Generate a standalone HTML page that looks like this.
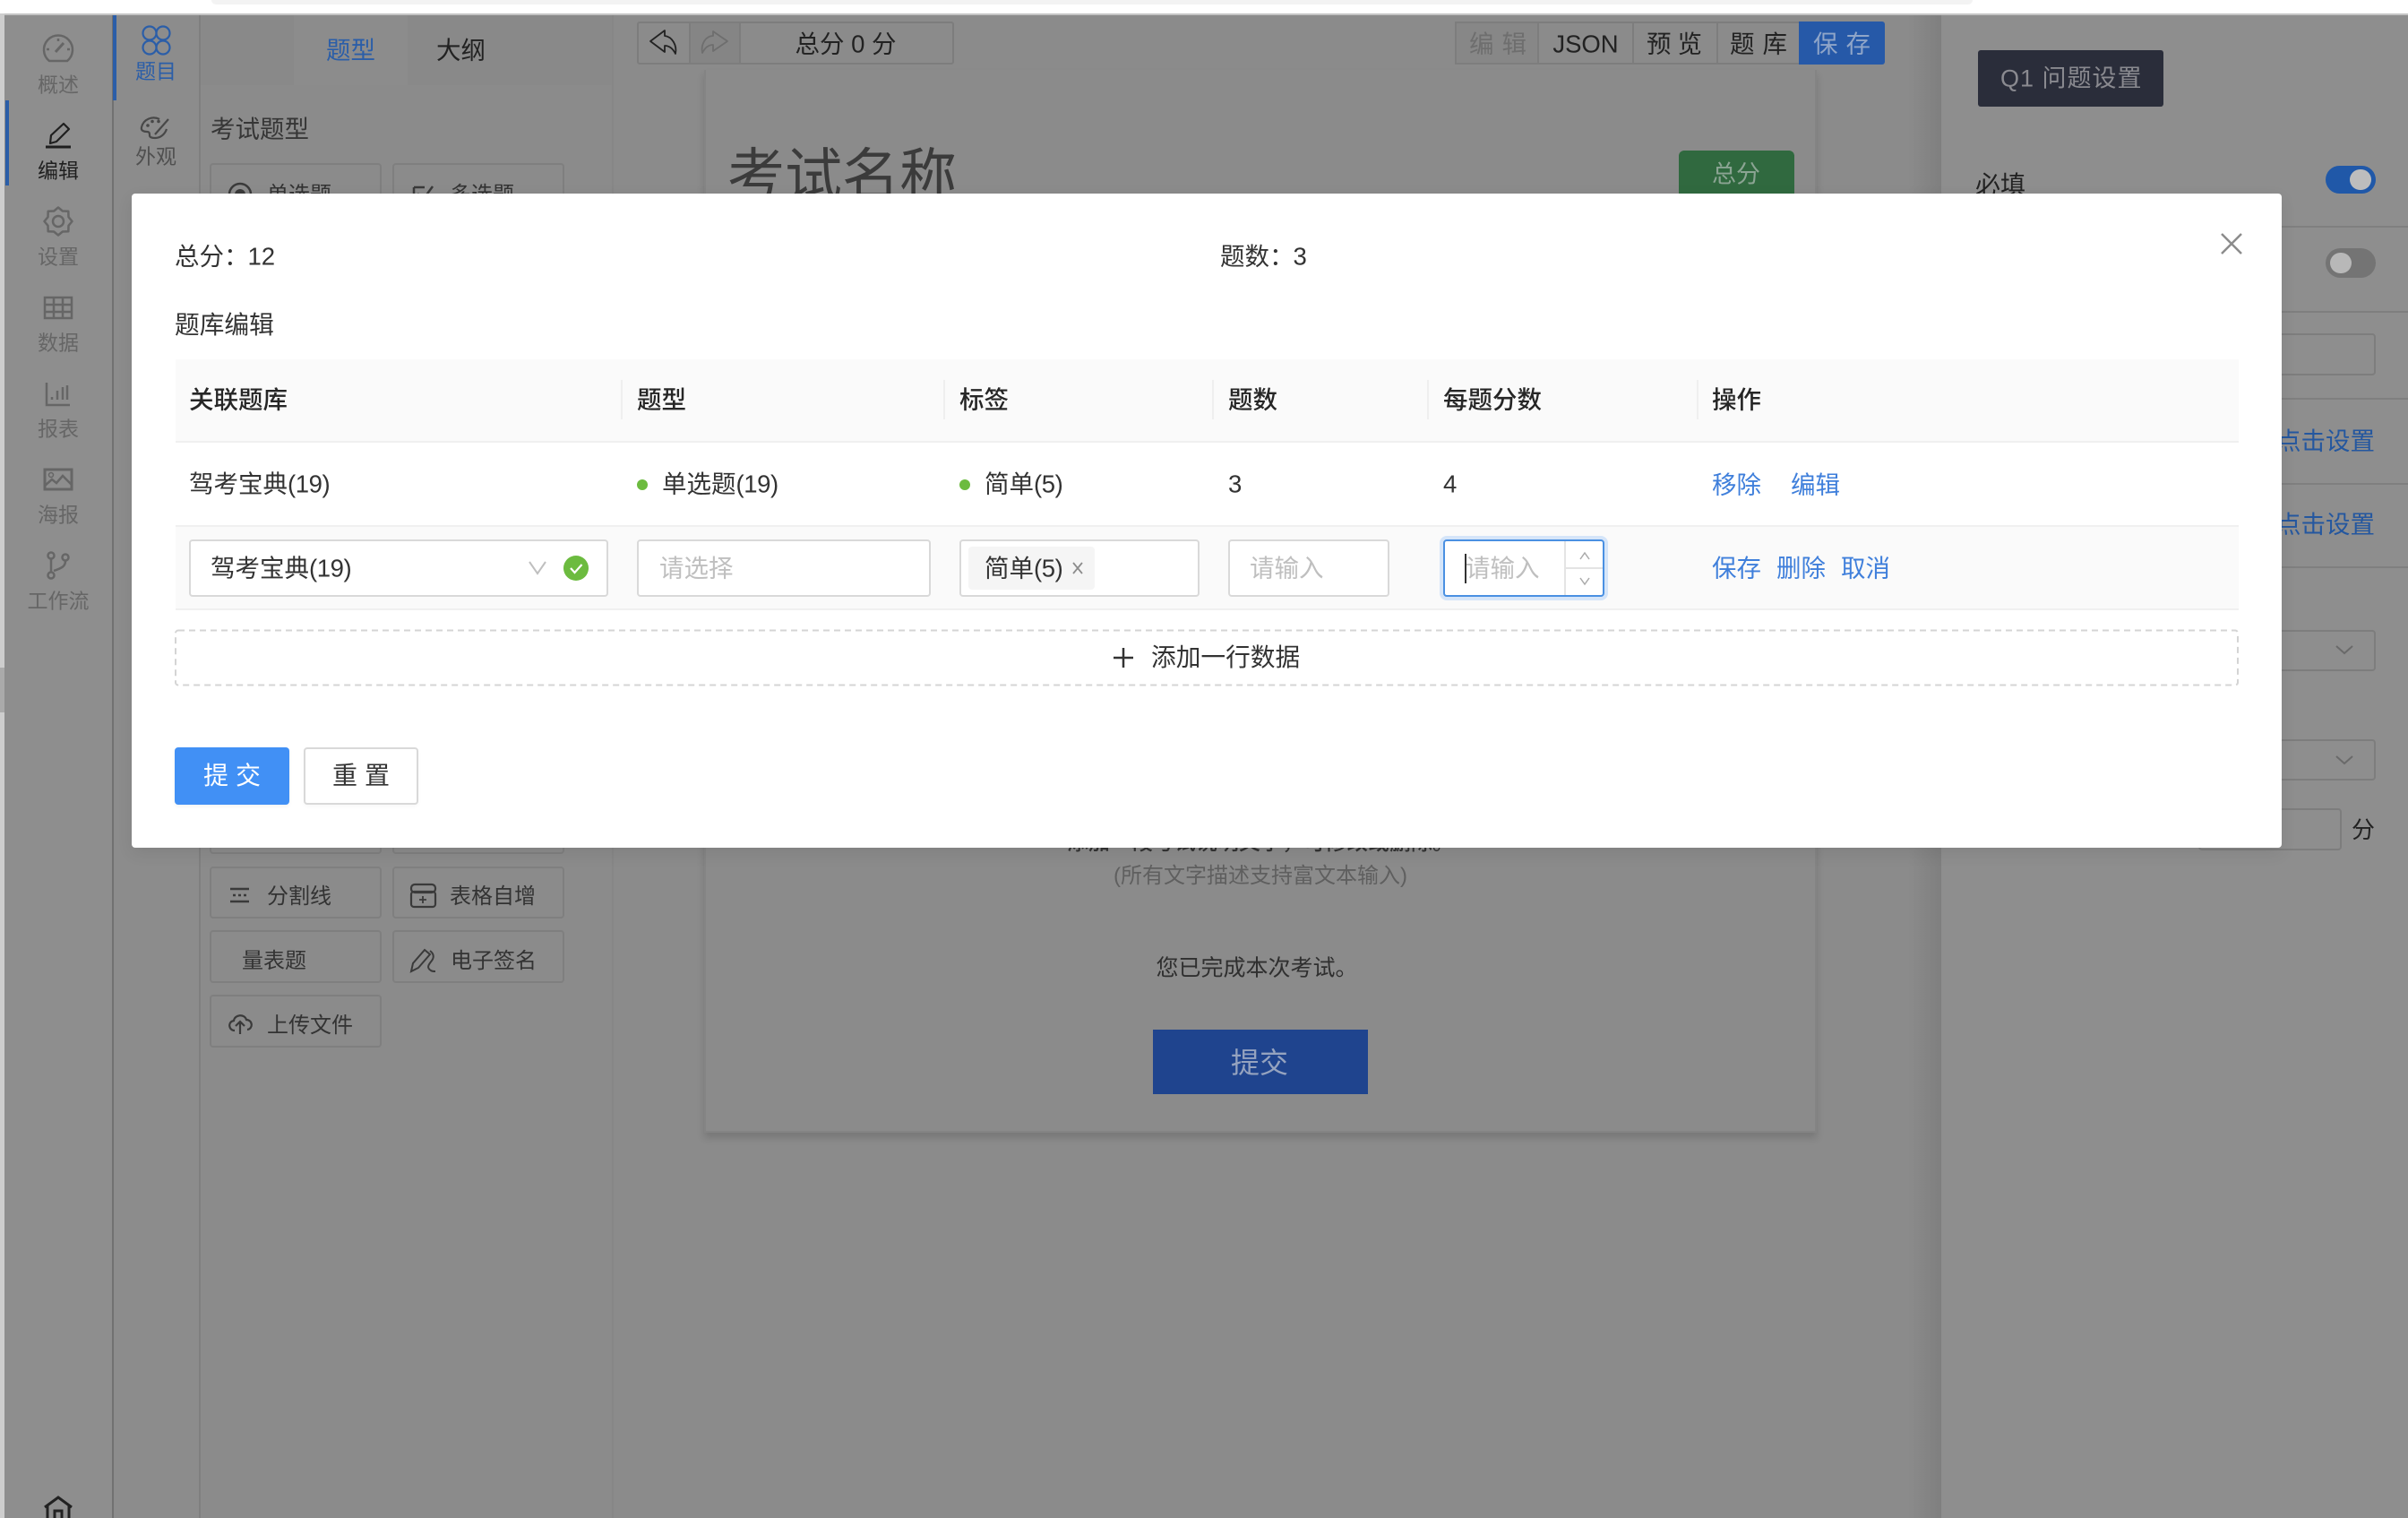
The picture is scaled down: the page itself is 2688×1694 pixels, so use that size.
<!DOCTYPE html>
<html lang="zh">
<head>
<meta charset="utf-8">
<title>题库编辑</title>
<style>
html,body{margin:0;padding:0;width:2688px;height:1694px;overflow:hidden;background:#8b8b8b;font-family:"Liberation Sans","Noto Sans CJK SC",sans-serif}
.b,.t{position:absolute;box-sizing:border-box}
.t{white-space:nowrap;line-height:1;transform:translateY(-50%)}
.c{transform:translate(-50%,-50%)}
svg{position:absolute;left:0;top:0;overflow:visible}
.bg{color:#333;font-size:24px}
.side{font-size:23px;color:#666}
.btn{border:2px solid #7f7f7f;border-radius:4px}
.m{font-size:27.5px;color:#333}
.h{font-weight:500;color:#262626}
.a{color:#3f7fdb}
.ph{color:#bfbfbf}
.n{letter-spacing:-.4px}
.inp{background:#fff;border:2px solid #d9d9d9;border-radius:4px;height:64px;top:602px}
.rs{background:#7f7f7f;height:2px;left:2546px;width:142px}
.ri{border:2px solid #7d7d7d;border-radius:4px}
</style>
</head>
<body>
<!-- browser top -->
<div class="b" style="left:0;top:0;width:2688px;height:15px;background:#fff"></div>
<div class="b" style="left:236px;top:0;width:1966px;height:5px;background:#f3f3f3;border-radius:0 0 10px 10px"></div>
<div class="b" style="left:0;top:15px;width:2688px;height:2px;background:#c4c4c4"></div>
<!-- left strip -->
<div class="b" style="left:0;top:15px;width:5px;height:1679px;background:#cdcdcd"></div>
<div class="b" style="left:0;top:745px;width:5px;height:50px;background:#aaa"></div>
<div class="b" style="left:5px;top:17px;width:120px;height:1677px;background:#8e8e8e"></div>
<div class="b" style="left:125px;top:17px;width:2px;height:1677px;background:#717171"></div>
<div class="b" style="left:127px;top:17px;width:95px;height:1677px;background:#8c8c8c"></div>
<div class="b" style="left:222px;top:17px;width:2px;height:1677px;background:#7f7f7f"></div>
<div class="b" style="left:6px;top:112px;width:4px;height:95px;background:#2b5ea8"></div>
<div class="b" style="left:126px;top:17px;width:4px;height:95px;background:#2b5ea8"></div>
<!-- component panel -->
<div class="b" style="left:224px;top:17px;width:104px;height:78px;background:#898989"></div>
<div class="b" style="left:328px;top:17px;width:127px;height:78px;background:#8c8c8c"></div>
<div class="b" style="left:455px;top:17px;width:228px;height:78px;background:#898989"></div>
<div class="b" style="left:683px;top:17px;width:2px;height:1677px;background:#868686"></div>
<!-- side labels -->
<div class="t c side" style="left:65px;top:95px">概述</div>
<div class="t c side" style="left:65px;top:191px;color:#1f1f1f">编辑</div>
<div class="t c side" style="left:65px;top:287px">设置</div>
<div class="t c side" style="left:65px;top:383px">数据</div>
<div class="t c side" style="left:65px;top:479px">报表</div>
<div class="t c side" style="left:65px;top:575px">海报</div>
<div class="t c side" style="left:65px;top:671px">工作流</div>
<div class="t c side" style="left:174px;top:80px;color:#2b5ea8">题目</div>
<div class="t c side" style="left:174px;top:175px;color:#505050">外观</div>
<div class="t" style="left:364px;top:56px;font-size:27.5px;color:#2b5ea8">题型</div>
<div class="t" style="left:487px;top:56px;font-size:27.5px;color:#222">大纲</div>
<div class="t" style="left:235px;top:144px;font-size:27.5px;color:#363636">考试题型</div>
<!-- component buttons -->
<div class="b btn" style="left:234px;top:182px;width:192px;height:58px"></div>
<div class="b btn" style="left:438px;top:182px;width:192px;height:58px"></div>
<div class="t bg" style="left:298px;top:218px">单选题</div>
<div class="t bg" style="left:502px;top:218px">多选题</div>
<div class="b btn" style="left:234px;top:895px;width:192px;height:58px"></div>
<div class="b btn" style="left:438px;top:895px;width:192px;height:58px"></div>
<div class="b btn" style="left:234px;top:967px;width:192px;height:58px"></div>
<div class="b btn" style="left:438px;top:967px;width:192px;height:58px"></div>
<div class="b btn" style="left:234px;top:1038px;width:192px;height:59px"></div>
<div class="b btn" style="left:438px;top:1038px;width:192px;height:59px"></div>
<div class="b btn" style="left:234px;top:1110px;width:192px;height:59px"></div>
<div class="t bg" style="left:298px;top:1001px">分割线</div>
<div class="t bg" style="left:502px;top:1001px">表格自增</div>
<div class="t bg" style="left:270px;top:1073px">量表题</div>
<div class="t bg" style="left:503px;top:1073px">电子签名</div>
<div class="t bg" style="left:298px;top:1145px">上传文件</div>
<!-- exam card -->
<div class="b" style="left:786px;top:78px;width:1242px;height:1186px;background:#8b8b8b;border:2px solid #848484;border-top:0;box-shadow:0 6px 8px rgba(0,0,0,.14)"></div>
<div class="t" style="left:812px;top:196px;font-size:64px;color:#3b3b3b">考试名称</div>
<div class="b" style="left:1874px;top:168px;width:129px;height:60px;background:#30693f;border-radius:6px"></div>
<div class="t c" style="left:1938px;top:195px;font-size:27px;color:#8ba493">总分</div>
<div class="t c" style="left:1407px;top:941px;font-size:24px;color:#333;font-weight:500">添加一段考试说明文字&#xFF0C;可修改或删除&#x3002;</div>
<div class="t c" style="left:1407px;top:978px;font-size:24px;color:#5f5f5f">(所有文字描述支持富文本输入)</div>
<div class="t c" style="left:1403px;top:1081px;font-size:25px;color:#2f2f2f">您已完成本次考试。</div>
<div class="b" style="left:1287px;top:1149px;width:240px;height:72px;background:#1f448e"></div>
<div class="t c" style="left:1406px;top:1186px;font-size:32px;color:#95a3bf">提交</div>
<!-- toolbar -->
<div class="b" style="left:711px;top:24px;width:354px;height:48px;border:2px solid #7d7d7d;border-radius:3px"></div>
<div class="b" style="left:769px;top:24px;width:58px;height:48px;background:#858585;border:solid #7d7d7d;border-width:2px"></div>
<div class="t c" style="left:944px;top:49px;font-size:27.5px;color:#222">总分 0 分</div>
<div class="b" style="left:1624px;top:24px;width:400px;height:48px;border:2px solid #7d7d7d;border-radius:3px"></div>
<div class="b" style="left:1624px;top:24px;width:94px;height:48px;background:#878787;border:2px solid #7d7d7d"></div>
<div class="b" style="left:1822px;top:24px;width:2px;height:48px;background:#7d7d7d"></div>
<div class="b" style="left:1916px;top:24px;width:2px;height:48px;background:#7d7d7d"></div>
<div class="b" style="left:2008px;top:24px;width:96px;height:48px;background:#2659a8;border-radius:0 3px 3px 0"></div>
<div class="t c" style="left:1672px;top:49px;font-size:27.5px;color:#6e6e6e;letter-spacing:9px;text-indent:9px">编辑</div>
<div class="t c" style="left:1770px;top:49px;font-size:27.5px;color:#222">JSON</div>
<div class="t c" style="left:1869px;top:49px;font-size:27.5px;color:#222;letter-spacing:7px;text-indent:7px">预览</div>
<div class="t c" style="left:1963px;top:49px;font-size:27.5px;color:#222;letter-spacing:9px;text-indent:9px">题库</div>
<div class="t c" style="left:2056px;top:49px;font-size:27.5px;color:#8fa5c8;letter-spacing:9px;text-indent:9px">保存</div>
<!-- right panel -->
<div class="b" style="left:2130px;top:17px;width:37px;height:1677px;background:linear-gradient(90deg,#8b8b8b,#7f7f7f)"></div>
<div class="b" style="left:2167px;top:17px;width:521px;height:1677px;background:#8e8e8e"></div>
<div class="b" style="left:2208px;top:56px;width:207px;height:63px;background:#2a2d3a;border-radius:3px"></div>
<div class="t" style="left:2233px;top:88px;font-size:27px;color:#8a8a90;letter-spacing:1px">Q1 问题设置</div>
<div class="t" style="left:2205px;top:207px;font-size:28px;color:#222">必填</div>
<div class="b" style="left:2596px;top:185px;width:56px;height:31px;border-radius:16px;background:#2058a8"></div>
<div class="b" style="left:2623px;top:189px;width:24px;height:23px;border-radius:12px;background:#bdbdbd"></div>
<div class="b" style="left:2596px;top:277px;width:56px;height:33px;border-radius:17px;background:#747474"></div>
<div class="b" style="left:2601px;top:282px;width:24px;height:23px;border-radius:12px;background:#b8b8b8"></div>
<div class="b rs" style="top:252px"></div>
<div class="b rs" style="top:347px"></div>
<div class="b rs" style="top:444px"></div>
<div class="b rs" style="top:539px"></div>
<div class="b rs" style="top:632px"></div>
<div class="b ri" style="left:2400px;top:372px;width:252px;height:47px"></div>
<div class="t" style="left:2541px;top:492px;font-size:27.5px;color:#24579f">点击设置</div>
<div class="t" style="left:2541px;top:585px;font-size:27.5px;color:#24579f">点击设置</div>
<div class="b ri" style="left:2400px;top:703px;width:252px;height:46px"></div>
<div class="b ri" style="left:2400px;top:825px;width:252px;height:46px"></div>
<div class="b ri" style="left:2454px;top:902px;width:160px;height:47px"></div>
<div class="t" style="left:2625px;top:926px;font-size:26px;color:#222">分</div>

<!-- background icons -->
<svg width="2688" height="1694" viewBox="0 0 2688 1694" fill="none">
<g stroke="#666" stroke-width="2.5">
<path d="M55 68A16 16 0 1 1 75 68Z"/><path d="M62 58L71 48" stroke-width="3"/><path d="M65 43v3M52 55h3M75 55h3"/>
<g transform="translate(65 247)" stroke-linejoin="round"><path d="M15.5 0L11.5 4.8 11.3 11.3 4.8 11.5 0 15.5-4.8 11.5-11.3 11.3-11.5 4.8-15.5 0-11.5-4.8-11.3-11.3-4.8-11.5 0-15.5 4.8-11.5 11.3-11.3 11.5-4.8Z"/><circle r="6"/></g>
<rect x="50" y="332" width="30" height="23"/><path d="M60 332v23M70 332v23M50 340h30M50 348h30"/>
<path d="M52 427v25h26M58 446v-3M64 446v-10M70 446v-14M75 446v-16"/>
<rect x="50" y="524" width="30" height="22" stroke-width="3"/><circle cx="57" cy="530" r="2.5" stroke-width="1.5"/><path d="M50 542l8-7 5 4 7-8 10 10"/>
<circle cx="57" cy="620" r="3.5"/><circle cx="73" cy="622" r="3.5"/><circle cx="57" cy="642" r="3.5"/><path d="M57 624v14M73 626c0 6-4 8-13 11"/>
</g>
<path d="M56 160l1-9 14-13 6 6-14 14z" stroke="#1f1f1f" stroke-width="2.2" stroke-linejoin="round"/>
<path d="M51 164h28" stroke="#1f1f1f" stroke-width="3"/>
<g stroke="#2b5ea8" stroke-width="2.2"><circle cx="167" cy="37" r="7.500"/><circle cx="182" cy="37" r="7.500"/><circle cx="167" cy="53" r="7.500"/><circle cx="182" cy="53" r="7.500"/></g>
<g stroke="#484848" stroke-width="2.200"><path d="M178 133c-8-4-18 0-20 9-1 4 3 5 6 5 3 0 3 2 3 4s2 3 6 3c6 0 11-4 13-10"/><path d="M188 133l-15 17"/></g>
<g fill="#484848"><circle cx="165" cy="140" r="1.800"/><circle cx="170" cy="135.500" r="1.800"/><circle cx="177" cy="135.500" r="1.800"/></g>
<path d="M50 1682l15-11 15 11M53 1680v14M77 1680v14M61 1694v-8h8v8" stroke="#222" stroke-width="3"/>
<circle cx="268" cy="217" r="12" stroke="#3a3a3a" stroke-width="2.500"/><circle cx="268" cy="217" r="6" fill="#3a3a3a"/>
<path d="M462 209h12M462 209v20h18v-12M466 216l6 7 11-15" stroke="#3a3a3a" stroke-width="2.500"/>
<path d="M257 992h21M260 999h3M266 999h3M272 999h3M257 1006h21" stroke="#3a3a3a" stroke-width="2.500"/>
<rect x="459" y="987" width="27" height="9" rx="4" stroke="#3a3a3a" stroke-width="2.200"/><rect x="459" y="995" width="27" height="17" rx="3" stroke="#3a3a3a" stroke-width="2.200"/><path d="M472 1000v8M468 1004h8" stroke="#3a3a3a" stroke-width="1.800"/>
<path d="M459 1084l2-9 13-15 6 5-13 15zM480 1061c4 3 5 7 2 11-4 5-6 8-1 11 1 1 3 1 5 1" stroke="#3a3a3a" stroke-width="2"/>
<path d="M262 1150c-7 0-8-10-1-11 1-7 12-8 14-1 7 0 8 10 1 11M268 1154v-13M263 1145l5-5 5 5" stroke="#3a3a3a" stroke-width="2.200"/>
<path d="M742 34L726 46l16 12v-7c5 0 9 3 12 9 2-10-4-19-12-20z" stroke="#222" stroke-width="1.800" stroke-linejoin="round"/>
<path d="M796 35L812 46 796 57v-7c-5 0-9 3-12 9-2-10 4-19 12-19z" stroke="#6e6e6e" stroke-width="1.800" stroke-linejoin="round"/>
<path d="M2608 721l9 8 9-8" stroke="#6a6a6a" stroke-width="2"/>
<path d="M2608 844l9 8 9-8" stroke="#6a6a6a" stroke-width="2"/>
</svg>

<!-- modal -->
<div class="b" style="left:147px;top:216px;width:2400px;height:730px;background:#fff;border-radius:4px;box-shadow:0 6px 18px rgba(0,0,0,.08)"></div>
<div class="t m" style="left:195px;top:286px">总分&#xFF1A;<span style="margin-left:-1px">12</span></div>
<div class="t m" style="left:1362px;top:286px">题数&#xFF1A;<span style="margin-left:-1px">3</span></div>
<div class="t m" style="left:195px;top:362.500px;font-size:27.7px">题库编辑</div>
<svg width="2688" height="1694" viewBox="0 0 2688 1694" fill="none"><path d="M2480 261l22 22M2502 261l-22 22" stroke="#8c8c8c" stroke-width="2.500"/></svg>

<!-- table -->
<div class="b" style="left:196px;top:401px;width:2303px;height:93px;background:#fafafa;border-bottom:2px solid #f0f0f0"></div>
<div class="b" style="left:196px;top:586px;width:2303px;height:95px;background:#fafafa;border-top:2px solid #f0f0f0;border-bottom:2px solid #f0f0f0"></div>
<div class="b" style="left:693px;top:424px;width:2px;height:44px;background:#efefef"></div>
<div class="b" style="left:1053px;top:424px;width:2px;height:44px;background:#efefef"></div>
<div class="b" style="left:1353px;top:424px;width:2px;height:44px;background:#efefef"></div>
<div class="b" style="left:1593px;top:424px;width:2px;height:44px;background:#efefef"></div>
<div class="b" style="left:1894px;top:424px;width:2px;height:44px;background:#efefef"></div>
<div class="t m h" style="left:211px;top:446px">关联题库</div>
<div class="t m h" style="left:711px;top:446px">题型</div>
<div class="t m h" style="left:1071px;top:446px">标签</div>
<div class="t m h" style="left:1371px;top:446px">题数</div>
<div class="t m h" style="left:1611px;top:446px">每题分数</div>
<div class="t m h" style="left:1911px;top:446px">操作</div>
<div class="t m" style="left:211px;top:540px">驾考宝典<span class="n">(19)</span></div>
<div class="b" style="left:711px;top:535px;width:12px;height:12px;border-radius:50%;background:#6cbb3f"></div>
<div class="t m" style="left:739px;top:540px">单选题<span class="n">(19)</span></div>
<div class="b" style="left:1071px;top:535px;width:12px;height:12px;border-radius:50%;background:#6cbb3f"></div>
<div class="t m" style="left:1099px;top:540px">简单<span class="n">(5)</span></div>
<div class="t m" style="left:1371px;top:540px">3</div>
<div class="t m" style="left:1611px;top:540px">4</div>
<div class="t m a" style="left:1911px;top:540.500px">移除</div>
<div class="t m a" style="left:1999px;top:540.500px">编辑</div>
<!-- edit row -->
<div class="b inp" style="left:211px;width:468px"></div>
<div class="t m" style="left:235px;top:634px">驾考宝典<span class="n">(19)</span></div>
<div class="b inp" style="left:711px;width:328px"></div>
<div class="t m ph" style="left:736px;top:634px">请选择</div>
<div class="b inp" style="left:1071px;width:268px"></div>
<div class="b" style="left:1081px;top:610px;width:141px;height:48px;background:#f5f5f5;border-radius:4px"></div>
<div class="t m" style="left:1099px;top:634px">简单<span class="n">(5)</span></div>
<div class="b inp" style="left:1371px;width:180px"></div>
<div class="t m ph" style="left:1395px;top:634px">请输入</div>
<div class="b inp" style="left:1611px;width:180px;border-color:#4a90e2;box-shadow:0 0 0 4px rgba(64,143,245,.2)"></div>
<div class="b" style="left:1746px;top:604px;width:2px;height:60px;background:#e4e4e4"></div>
<div class="b" style="left:1746px;top:633px;width:43px;height:2px;background:#e4e4e4"></div>
<div class="t m ph" style="left:1636px;top:634px">请输入</div>
<div class="b" style="left:1635px;top:618px;width:2px;height:33px;background:#333"></div>
<div class="t m a" style="left:1911px;top:634px">保存</div>
<div class="t m a" style="left:1983px;top:634px">删除</div>
<div class="t m a" style="left:2055px;top:634px">取消</div>
<svg width="2688" height="1694" viewBox="0 0 2688 1694" fill="none">
<path d="M591 627l9 13 9-13" stroke="#bfbfbf" stroke-width="2"/>
<circle cx="643" cy="634" r="14" fill="#6cbb3f"/><path d="M637 634l4.500 5 8-9" stroke="#fff" stroke-width="2.200"/>
<path d="M1198 628l10 12M1208 628l-10 12" stroke="#8c8c8c" stroke-width="1.800"/>
<path d="M1764 624l5-7 5 7M1764 645l5 7 5-7" stroke="#aaa" stroke-width="1.500"/>
<rect x="196" y="703.500" width="2302" height="61" rx="3" stroke="#d4d4d4" stroke-width="2" stroke-dasharray="7 5"/>
<path d="M1254 723v22M1243 734h22" stroke="#333" stroke-width="2.500"/>
</svg>
<div class="t m" style="left:1285px;top:734px;font-size:27.7px">添加一行数据</div>
<!-- modal buttons -->
<div class="b" style="left:195px;top:834px;width:128px;height:64px;background:#4190f5;border-radius:4px;box-shadow:0 2px 4px rgba(0,0,0,.05)"></div>
<div class="t c" style="left:259px;top:866px;font-size:28px;color:#fff;letter-spacing:8px;text-indent:8px">提交</div>
<div class="b" style="left:339px;top:834px;width:128px;height:64px;background:#fff;border:2px solid #d9d9d9;border-radius:4px;box-shadow:0 2px 4px rgba(0,0,0,.03)"></div>
<div class="t c" style="left:403px;top:866px;font-size:28px;color:#333;letter-spacing:8px;text-indent:8px">重置</div>
</body>
</html>
